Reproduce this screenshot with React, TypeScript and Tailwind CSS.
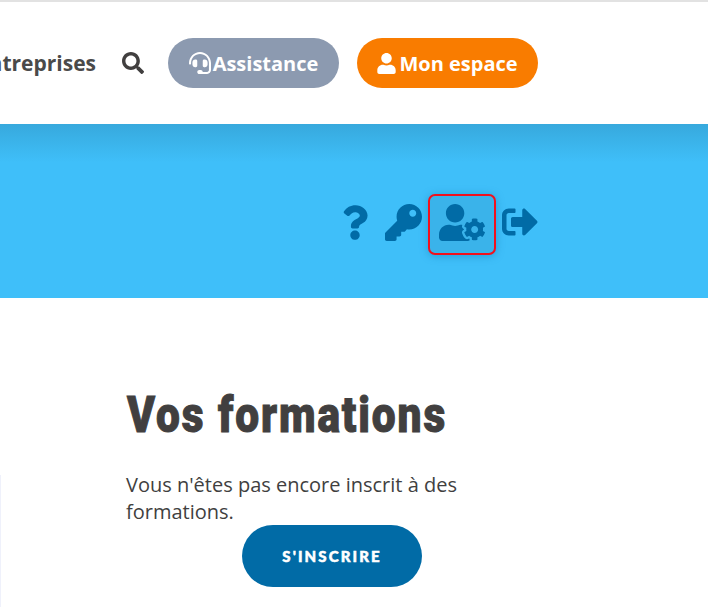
import { FaQuestion, FaKey, FaUserCog, FaSignOutAlt, FaSearch, FaHeadset, FaUser } from "react-icons/fa";

const sans = "font-['Open_Sans','Noto_Sans',sans-serif]";

export default function App() {
  return (
    <div className={`w-[708px] h-[607px] overflow-hidden bg-white flex flex-col ${sans}`}>
      <div className="h-[2px] shrink-0 bg-[#e2e2e2]" />
      <header className="h-[122px] shrink-0 flex items-center justify-end gap-[18px] pr-[170px] overflow-hidden">
        <span className="pt-[1px] whitespace-nowrap text-[21px] font-bold text-[#4a4a4a] leading-none">Entreprises</span>
        <FaSearch className="ml-[8px] mr-[6px] w-[22px] h-[22px] text-[#413f3f] shrink-0" />
        <a className="w-[171px] h-[50px] shrink-0 rounded-[25px] bg-[#8c9ab0] text-white flex items-center justify-center text-[20px] font-bold">
          <FaHeadset className="w-[22px] h-[22px] shrink-0" />
          <span className="ml-[2px] pt-[2px]">Assistance</span>
        </a>
        <a className="w-[181px] h-[50px] shrink-0 rounded-[25px] bg-[#f97c00] text-white flex items-center justify-center text-[20px] font-bold">
          <FaUser className="w-[19px] h-[21px] shrink-0" />
          <span className="ml-[3px] pt-[2px]">Mon espace</span>
        </a>
      </header>
      <section className="h-[174px] shrink-0 bg-gradient-to-b from-[#37a9dd] to-[#3fbff9] to-[22%] flex items-center justify-end pr-[170px] pt-[26px] text-[#016ba6]">
        <FaQuestion className="w-[26px] h-[37px] mr-[17px] -mt-[4px]" />
        <FaKey className="w-[37px] h-[37px] mr-[6px] -mt-[4px]" />
        <div className="w-[68px] h-[61px] rounded-[7px] border-2 border-[#f2101c] bg-[#3ab3ea] shadow-[0_1px_8px_rgba(1,107,166,0.4)] flex items-center justify-center">
          <FaUserCog className="w-[46px] h-[37px] -mt-[4px]" />
        </div>
        <FaSignOutAlt className="w-[36px] h-[36px] ml-[6px] -mt-[4px]" />
      </section>
      <div className="flex-1 flex">
        <div className="w-[1px] mt-[177px] shrink-0 bg-[#eff1fb]" />
        <main className="pl-[125px] pt-[88px] text-[#413f3f]">
          <h1 className="ml-[1px] font-['Roboto',sans-serif] font-black text-[50px] leading-[58px] tracking-[2.2px] [-webkit-text-stroke:1px_#413f3f] whitespace-nowrap origin-left scale-x-[0.85]">Vos formations</h1>
          <p className="mt-[27px] w-[360px] text-[20px] leading-[27px]">Vous n'êtes pas encore inscrit à des formations.</p>
          <a className="ml-[116px] w-[180px] h-[62px] rounded-[31px] bg-[#016ba6] text-white flex items-center justify-center text-[15px] font-black tracking-[2.1px] [-webkit-text-stroke:0.5px_#ffffff] font-['Lato',sans-serif]">S'INSCRIRE</a>
        </main>
      </div>
    </div>
  );
}
